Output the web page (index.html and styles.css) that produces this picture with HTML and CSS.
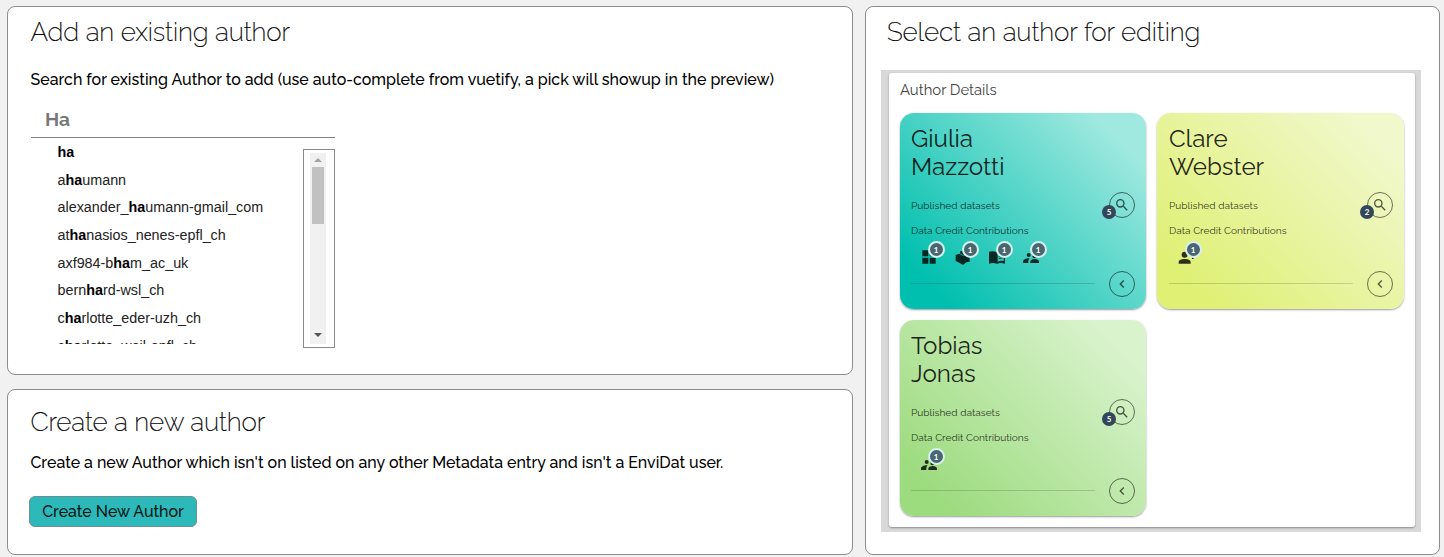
FILE: index.html
```html
<!DOCTYPE html>
<html lang="en">
<head>
<meta charset="utf-8">
<title>Authors</title>
<link rel="stylesheet" href="styles.css">
</head>
<body>
<svg class="defs" width="0" height="0">
  <symbol id="search" viewBox="0 0 24 24"><path d="M9.5 3A6.5 6.5 0 0 1 16 9.500c0 1.610-.590 3.090-1.560 4.230l.270.270h.790l5 5-1.500 1.500-5-5v-.790l-.270-.270A6.516 6.516 0 0 1 9.500 16a6.500 6.500 0 0 1 0-13m0 2C7 5 5 7 5 9.500S7 14 9.500 14 14 12 14 9.500 12 5 9.500 5z"/></symbol>
  <symbol id="left" viewBox="0 0 24 24"><path d="M15.400 16.600 10.800 12l4.600-4.600L14 6l-6 6 6 6z"/></symbol>
  <symbol id="widgets" viewBox="0 0 24 24"><path d="M2 2h9v9H2zM2 13h9v9H2zM13 13h9v9h-9zM13 2h9v9h-9z"/></symbol>
  <symbol id="box" viewBox="0 0 24 24"><path d="M1 9l5-2 6 3 6-3 4 2v10l-5 1-5 4-5-3-6-3zM8 3h8v4l-4 2-4-2z"/></symbol>
  <symbol id="book" viewBox="0 0 24 24"><path fill-rule="evenodd" d="M0 4q6-2 12 1 6-3 12-1v18q-6-2-12 0-6-2-12 0zM13 7v12q4-2 9-1V6q-5-1-9 1zM14.500 10q3-1 6-.7v1.500q-3-.3-6 .7zM14.500 13.500q3-1 6-.7v1.500q-3-.3-6 .7z"/></symbol>
  <symbol id="people" viewBox="0 0 24 24"><path d="M8.500 6a3 3 0 1 1 0 6 3 3 0 0 1 0-6zM17 8a3 3 0 1 1 0 6 3 3 0 0 1 0-6zM0 21v-2c0-3 4-5 9-5l1 .2c-2 1.500-2 3-2 6.800zM11 21v-2c0-2.500 3-4 6.500-4s6.500 1.500 6.500 4v2z"/></symbol>
  <symbol id="person" viewBox="0 0 24 24"><path d="M10 4a4.500 4.500 0 1 1 0 9 4.500 4.500 0 0 1 0-9zM1 22v-2.500C1 17 5 15 10 15s9 2 9 4.500V22zM21 12h2.500v3H21z"/></symbol>
</svg>
<main class="page">
  <div class="left">
    <section class="panel add">
      <h1>Add an existing author</h1>
      <p class="lead">Search for existing Author to add (use auto-complete from vuetify, a pick will showup in the preview)</p>
      <div class="combo">
        <div class="query">Ha</div>
        <div class="drop">
          <ul class="options">
            <li><b>ha</b></li>
            <li>a<b>ha</b>umann</li>
            <li>alexander_<b>ha</b>umann-gmail_com</li>
            <li>at<b>ha</b>nasios_nenes-epfl_ch</li>
            <li>axf984-b<b>ha</b>m_ac_uk</li>
            <li>bern<b>ha</b>rd-wsl_ch</li>
            <li>c<b>ha</b>rlotte_eder-uzh_ch</li>
            <li>c<b>ha</b>rlotte_weil-epfl_ch</li>
          </ul>
          <div class="scroll"><div class="track"><i class="up"></i><i class="thumb"></i><i class="down"></i></div></div>
        </div>
      </div>
    </section>
    <section class="panel create">
      <h1>Create a new author</h1>
      <p class="lead">Create a new Author which isn't on listed on any other Metadata entry and isn't a EnviDat user.</p>
      <button class="btn">Create New Author</button>
    </section>
  </div>
  <section class="panel select">
    <h1>Select an author for editing</h1>
    <div class="frame">
      <div class="sheet">
        <h2>Author Details</h2>
        <div class="cards">
          <article class="card teal">
            <h3>Giulia<br>Mazzotti</h3>
            <div class="row published"><span>Published datasets</span><span class="round"><svg class="lens"><use href="#search"/></svg><em>5</em></span></div>
            <div class="row credit">Data Credit Contributions</div>
            <div class="icons">
              <span><svg><use href="#widgets"/></svg><em>1</em></span>
              <span><svg><use href="#box"/></svg><em>1</em></span>
              <span><svg><use href="#book"/></svg><em>1</em></span>
              <span><svg><use href="#people"/></svg><em>1</em></span>
            </div>
            <div class="foot"><hr><span class="round"><svg class="chev"><use href="#left"/></svg></span></div>
          </article>
          <article class="card yellow">
            <h3>Clare<br>Webster</h3>
            <div class="row published"><span>Published datasets</span><span class="round"><svg class="lens"><use href="#search"/></svg><em>2</em></span></div>
            <div class="row credit">Data Credit Contributions</div>
            <div class="icons"><span><svg><use href="#person"/></svg><em>1</em></span></div>
            <div class="foot"><hr><span class="round"><svg class="chev"><use href="#left"/></svg></span></div>
          </article>
          <article class="card green">
            <h3>Tobias<br>Jonas</h3>
            <div class="row published"><span>Published datasets</span><span class="round"><svg class="lens"><use href="#search"/></svg><em>5</em></span></div>
            <div class="row credit">Data Credit Contributions</div>
            <div class="icons"><span><svg><use href="#people"/></svg><em>1</em></span></div>
            <div class="foot"><hr><span class="round"><svg class="chev"><use href="#left"/></svg></span></div>
          </article>
        </div>
      </div>
    </div>
  </section>
</main>
</body>
</html>
```
FILE: styles.css
```css
* { box-sizing: border-box; }
body { margin: 0; background: #f1f1f1; color: #000; font-family: Raleway, Lato, sans-serif; overflow: hidden; }
h1, h2, h3, p, ul { margin: 0; padding: 0; font-weight: 400; }
.defs { display: block; }
.page { display: flex; gap: 12px; height: 557px; padding: 6px 4px 2px 7px; }
.left { width: 846px; display: flex; flex-direction: column; gap: 14px; }
.panel { background: #fff; border: 1px solid #8c8c8c; border-radius: 8px; white-space: nowrap; }
.add { height: 369px; padding: 8px 23px 0 22.500px; }
.create { height: 166px; padding: 15px 23px 0 22.500px; }
.select { width: 575px; padding: 8px 16px 0 15px; }
h1 { font-size: 26px; line-height: 34px; font-weight: 200; letter-spacing: -.1px; -webkit-text-stroke: .2px #000; }
.select h1 { padding-left: 6px; letter-spacing: -.07px; }
.lead { font-size: 15.950px; line-height: 22px; font-weight: 500; }
.add .lead { margin-top: 20px; }
.create .lead { margin-top: 13px; }
.btn { display: block; width: 168px; height: 31px; margin: 22px 0 0 -1.500px; padding: 0; border: 1px solid #6f8f90; border-radius: 6px; background: #2db9b9; color: #001414; font: 500 15.950px Raleway, Lato, sans-serif; }
.combo { width: 304px; margin: 14px 0 0 .5px; }
.query { height: 33px; padding-left: 14px; border-bottom: 1px solid #808080; color: #777; font-size: 19px; line-height: 29px; font-weight: 700; }
.drop { display: flex; justify-content: space-between; align-items: flex-end; height: 210px; }
.options { list-style: none; align-self: flex-start; height: 206px; overflow: hidden; padding: 1px 0 0 26.500px; font: 14.350px/27.650px "Liberation Sans", Arial, sans-serif; color: #222; }
.options b { color: #000; }
.scroll { width: 32px; height: 199px; padding: 3px 8px 3px 6px; border: 1px solid #8a8a8a; }
.track { display: flex; flex-direction: column; align-items: center; width: 16px; height: 191px; background: #f1f1f1; }
.up, .down { width: 0; height: 0; border: 4px solid transparent; }
.up { margin-top: 1px; border-bottom-color: #a3a3a3; }
.thumb { width: 12px; height: 57px; margin-top: 5px; background: #c1c1c1; }
.down { margin-top: auto; margin-bottom: 3px; border-top-color: #555; }
.frame { width: 540px; height: 462px; margin-top: 21px; padding: 3px 6px 5px 8px; background: #d9d9d9; }
.sheet { height: 454px; padding: 6px 11px; background: #fff; border-radius: 3px; box-shadow: 0 1px 2px #888; }
h2 { color: #444; font-size: 14.850px; line-height: 22px; }
.cards { display: grid; grid-template-columns: 246px 247px; grid-auto-rows: 196px; gap: 11px; margin-top: 11.500px; }
.card { display: flex; flex-direction: column; padding: 12px 11px 0; border-radius: 14px; box-shadow: 0 1px 2px #0006; }
.yellow { padding-left: 12px; }
.teal { background: linear-gradient(45deg, #00bfae 12%, #a0e9e0 88%); }
.yellow { background: linear-gradient(45deg, #dff074 12%, #f1f8cb 88%); }
.green { background: linear-gradient(45deg, #9ddb7f 12%, #d9f3cd 88%); }
h3 { height: 57px; color: rgba(0,0,0,.85); font-size: 24.200px; line-height: 28.500px; }
.row { font-size: 10.150px; color: rgba(0,0,0,.78); }
.published { display: flex; align-items: center; justify-content: space-between; height: 26px; margin-top: 10.500px; }
.credit { height: 16px; line-height: 16px; margin-top: 4px; }
.round { position: relative; flex: none; display: flex; align-items: center; justify-content: center; width: 26px; height: 26px; border: 1px solid rgba(0,0,0,.55); border-radius: 50%; }
.lens, .chev { width: 16px; height: 16px; fill: rgba(0,0,0,.65); }
em { position: absolute; display: flex; align-items: center; justify-content: center; border-radius: 50%; background: #33475a; color: #fff; font: 700 8px/1 Lato, sans-serif; }
.round em { left: -8px; top: 12px; width: 14px; height: 14px; }
.icons { display: flex; gap: 18px; height: 32px; padding: 11px 0 0 9.500px; }
.yellow .icons { padding-left: 8.500px; }
.icons span { position: relative; width: 16px; height: 16px; }
.icons svg { display: block; width: 16px; height: 16px; fill: rgba(0,0,0,.8); }
.icons em { left: 7px; top: -8px; width: 17px; height: 17px; border: 2px solid #d5f0ed; background: #4a6670; }
.foot { display: flex; align-items: center; justify-content: space-between; height: 26px; margin-top: .5px; }
hr { width: 184px; height: 1px; margin: 0; border: 0; background: rgba(0,0,0,.15); }
```
